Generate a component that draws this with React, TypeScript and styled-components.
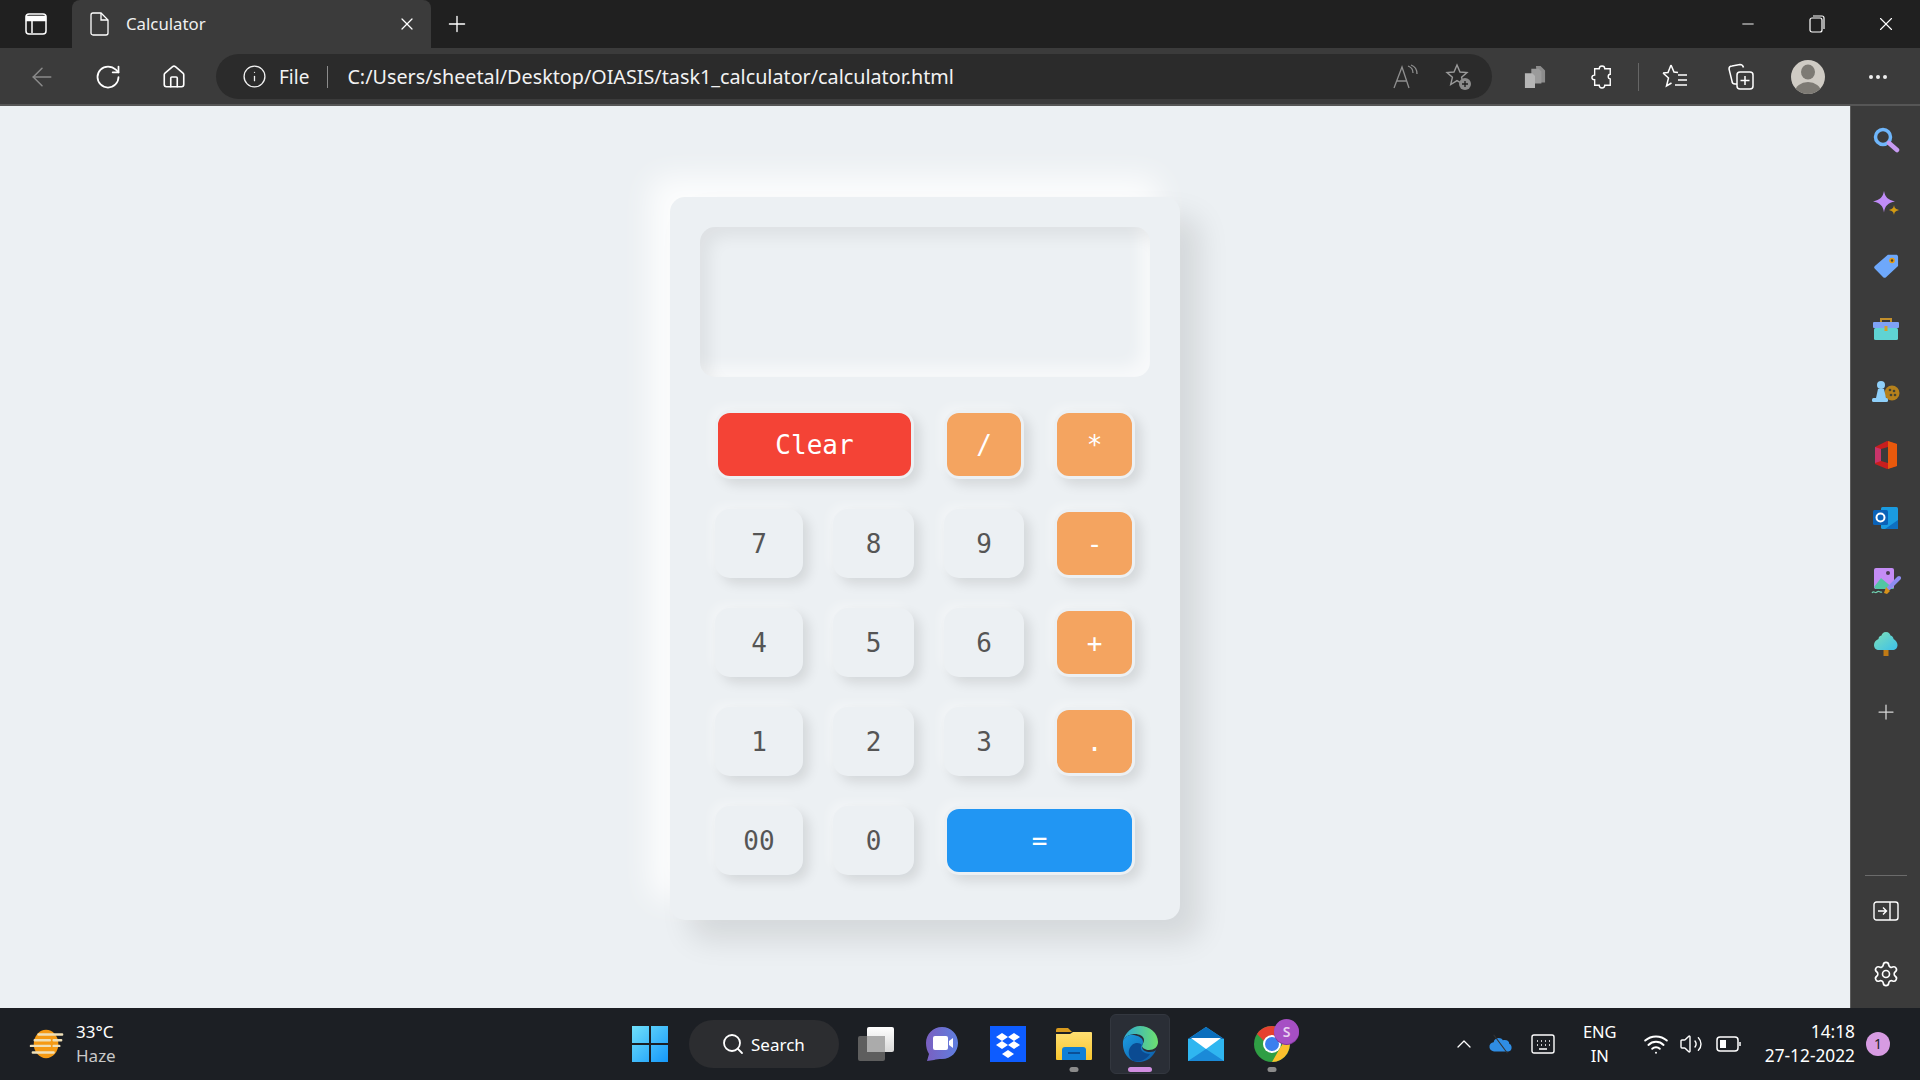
import React from "react"
import styled, { createGlobalStyle } from "styled-components"
import {
  ArrowLeft,
  ChevronUp,
  Home,
  Info,
  Minus,
  Plus,
  RotateCw,
  Search,
  Settings,
  Volume2,
  Wifi,
  X,
} from "lucide-react"

const UI_FONT = `"Noto Sans", "Open Sans", sans-serif`

const GlobalStyle = createGlobalStyle`
  html, body { margin: 0; padding: 0; height: 100%; }
  body { font-family: ${UI_FONT}; background: #ecf0f3; overflow: hidden; }
  * { box-sizing: border-box; }
`

const Screen = styled.div`
  width: 1920px;
  height: 1080px;
  display: flex;
  flex-direction: column;
`

/* browser chrome */
const TabStrip = styled.div`
  height: 48px;
  background: #202020;
  display: flex;
  align-items: center;
  color: #fff;
`

const PanelButton = styled.div`
  width: 72px;
  display: flex;
  justify-content: center;
`

const Tab = styled.div`
  width: 359px;
  height: 48px;
  background: #3b3b3b;
  border-radius: 8px 8px 0 0;
  display: flex;
  align-items: center;
  padding: 0 14px 0 18px;
`

const TabTitle = styled.span`
  margin: 0 0 2px 16px;
  flex: 1;
  font-size: 16.8px;
  color: #f0f0f0;
`

const NewTab = styled.div`
  width: 52px;
  display: flex;
  justify-content: center;
`

const WindowControls = styled.div`
  margin-left: auto;
  display: flex;
  align-items: center;
`

const WindowControl = styled.div`
  width: 69px;
  display: flex;
  justify-content: center;
`

const Toolbar = styled.div`
  height: 58px;
  background: #3b3b3b;
  border-bottom: 2px solid #565656;
  display: flex;
  align-items: center;
  color: #fff;
  padding-top: 1px;
`

const NavButton = styled.div<{ $w?: number; $muted?: boolean }>`
  width: ${p => p.$w ?? 66}px;
  display: flex;
  justify-content: center;
  align-items: center;
  color: ${p => (p.$muted ? "#8a8a8a" : "#fff")};
`

const NavGroup = styled.div`
  width: 207px;
  padding-left: 9px;
  display: flex;
`

const AddressBar = styled.div`
  width: 1276px;
  height: 45px;
  margin-left: 9px;
  border-radius: 23px;
  background: #2b2b2b;
  display: flex;
  align-items: center;
  padding: 0 6px 0 26px;
`

const SiteLabel = styled.span`
  font-size: 19px;
  margin-left: 12px;
  color: #f2f2f2;
`

const AddressDivider = styled.span`
  width: 1px;
  height: 22px;
  background: #8c8c8c;
  margin: 0 19px 0 18px;
`

const Url = styled.span`
  flex: 1;
  font-size: 19.75px;
  color: #f2f2f2;
  white-space: nowrap;
`

const ToolActions = styled.div`
  display: flex;
  align-items: center;
  margin-left: 8px;
`

const ToolbarSeparator = styled.span`
  width: 1px;
  height: 28px;
  background: #666;
  margin: 0 4px;
`

const Avatar = styled.div`
  width: 34px;
  height: 34px;
  border-radius: 50%;
  background: #cfcbc4;
  overflow: hidden;
`

const MoreDots = styled.span`
  display: flex;
  gap: 3px;
  i {
    width: 4px;
    height: 4px;
    background: #eee;
    border-radius: 50%;
  }
`

const Main = styled.div`
  flex: 1;
  display: flex;
  min-height: 0;
`

/* calculator page */
const Page = styled.main`
  flex: 1;
  display: flex;
  justify-content: center;
  align-items: center;
  padding-top: 3px;
  background: #ecf0f3;
`

const Calculator = styled.div`
  width: 510px;
  height: 723px;
  padding: 30px;
  border-radius: 15px;
  background: #ecf0f3;
  box-shadow: 20px 20px 30px rgba(0, 0, 0, 0.1), -20px -20px 30px rgba(255, 255, 255, 0.85);
`

const Display = styled.input`
  display: block;
  width: 450px;
  height: 150px;
  border: none;
  outline: none;
  border-radius: 15px;
  background: #ecf0f3;
  box-shadow: inset 10px 10px 15px rgba(0, 0, 0, 0.06),
    inset -10px -10px 15px rgba(255, 255, 255, 0.6);
`

const Keys = styled.div`
  margin: 33px 0 0 15px;
  display: grid;
  grid-template-columns: 88px 81px 80px 81px;
  grid-auto-rows: 69px;
  gap: 30px;
`

const Key = styled.button<{ $tone?: string; $span?: number }>`
  grid-column: span ${p => p.$span ?? 1};
  border: 3px solid #ecf0f3;
  border-radius: 15px;
  background: ${p => p.$tone ?? "#ecf0f3"};
  color: ${p => (p.$tone ? "#fff" : "#555")};
  font-family: "DejaVu Sans Mono", monospace;
  font-size: 26px;
  padding: 0;
  box-shadow: 6px 6px 12px rgba(0, 0, 0, 0.1), -5px -5px 10px rgba(255, 255, 255, 0.3);
`

/* side panel */
const SidePanel = styled.aside`
  width: 70px;
  background: #3b3b3b;
  border-left: 1px solid #5c5c5c;
  display: flex;
  flex-direction: column;
  align-items: center;
  padding: 2px 0 3px;
`

const SideItem = styled.div`
  height: 63px;
  width: 100%;
  display: flex;
  align-items: center;
  justify-content: center;
`

const SideAdd = styled(SideItem)`
  margin-top: 5px;
  color: #d8d8d8;
`

const SideRule = styled.div`
  width: 42px;
  height: 1px;
  background: #6b6b6b;
  margin: auto 0 3px;
`

const SideFooterItem = styled(SideItem)`
  color: #fff;
`

/* taskbar */
const Taskbar = styled.footer`
  height: 72px;
  background: #1c1f24;
  display: grid;
  grid-template-columns: 1fr auto 1fr;
  align-items: center;
  color: #fff;
`

const Weather = styled.div`
  display: flex;
  align-items: center;
  padding-left: 29px;
  gap: 11px;
`

const WeatherText = styled.div`
  font-size: 17px;
  line-height: 24px;
  span {
    display: block;
    color: #c8c8c8;
  }
`

const TaskIcons = styled.div`
  display: flex;
  align-items: center;
  padding-left: 2px;
`

const TaskIcon = styled.div<{ $active?: boolean }>`
  width: ${p => (p.$active ? 60 : 66)}px;
  height: 60px;
  margin: 0 ${p => (p.$active ? 3 : 0)}px;
  position: relative;
  display: flex;
  align-items: center;
  justify-content: center;
  border-radius: 6px;
  background: ${p => (p.$active ? "#2a2e36" : "transparent")};
  border: 1px solid ${p => (p.$active ? "#33373f" : "transparent")};
`

const RunningDot = styled.span<{ $active?: boolean }>`
  position: absolute;
  bottom: 1px;
  left: 50%;
  transform: translateX(-50%);
  width: ${p => (p.$active ? 24 : 9)}px;
  height: 5px;
  border-radius: 3px;
  background: ${p => (p.$active ? "#d08ee0" : "#8b8b8b")};
`

const ProfileBubble = styled.span`
  position: absolute;
  top: 4px;
  left: 34px;
  width: 25px;
  height: 25px;
  border-radius: 50%;
  background: #a64fc4;
  box-shadow: 0 1px 0 #7d3698;
  color: #e8d0f0;
  font-size: 14px;
  font-weight: 600;
  line-height: 25px;
  text-align: center;
`

const SearchPill = styled.div`
  width: 150px;
  height: 48px;
  margin: 0 4px 0 6px;
  border-radius: 24px;
  background: #2c2d30;
  display: flex;
  align-items: center;
  padding-left: 32px;
  gap: 6px;
  font-size: 17px;
`

const Tray = styled.div`
  display: flex;
  align-items: center;
  justify-content: flex-end;
  padding-right: 30px;
`

const TrayItem = styled.div<{ $w: number }>`
  width: ${p => p.$w}px;
  display: flex;
  justify-content: center;
  align-items: center;
`

const Lang = styled.div`
  font-size: 16.5px;
  line-height: 24px;
  text-align: center;
  width: 66px;
  margin-right: 5px;
`

const Clock = styled.div`
  font-size: 17.3px;
  line-height: 24px;
  text-align: right;
  margin-left: 15px;
`

const Badge = styled.div`
  width: 24px;
  height: 24px;
  border-radius: 50%;
  background: #d79be2;
  color: #222;
  font-size: 14px;
  line-height: 24px;
  text-align: center;
  margin-left: 11px;
`

const StarAdd = () => (
  <svg width="30" height="30" viewBox="0 0 30 30" fill="none" stroke="#9a9a9a" strokeWidth="1.4">
    <path d="M13 3l3 7 7 .6-5.400 4.700 1.700 7-6.300-3.700-6.300 4 1.700-7.300L3 10.600l7-.6z" />
    <circle cx="21" cy="22" r="6" fill="#8c8c8c" stroke="none" />
    <path d="M21 19v6M18 22h6" stroke="#222" />
  </svg>
)

const Sidebar = [
  <svg key="s" width="28" height="28" viewBox="0 0 28 28" fill="none">
    <circle cx="11" cy="11" r="7.500" stroke="#6fb6fb" strokeWidth="3.500" />
    <path d="M17 17l8 7" stroke="#c79bf2" strokeWidth="4.500" strokeLinecap="round" />
  </svg>,
  <svg key="sp" width="26" height="26" viewBox="0 0 26 26">
    <path d="M11 1c1 6 4 9 11 10.500-7 1.500-10 4-11 11-1-7-4-9.500-11-11C7 10 10 7 11 1z" fill="#c08cf8" />
    <path d="M21 15c.5 3 1.500 4 5 5-3.500 1-4.500 2-5 5-.5-3-1.500-4-5-5 3.500-1 4.500-2 5-5z" fill="#d39a12" />
  </svg>,
  <svg key="t" width="26" height="26" viewBox="0 0 28 28">
    <path d="M16 2h9c1 0 2 1 2 2v10L14 26c-1 1-2 1-3 0L2 17c-1-1-1-2 0-3z" fill="#6ea8fb" />
    <circle cx="20.500" cy="8" r="3" fill="#e89a10" />
    <circle cx="20.500" cy="8" r="1.300" fill="#443" />
  </svg>,
  <svg key="b" width="28" height="26" viewBox="0 0 28 26" fill="none">
    <path d="M9 7V3h10v4" stroke="#c28f2c" strokeWidth="2" />
    <rect x="1" y="6" width="26" height="6" rx="1" fill="#7fa2f6" />
    <rect x="2" y="12" width="24" height="12" rx="1.500" fill="#5fd3d3" />
    <rect x="12.500" y="10" width="3" height="5" fill="#d3a02c" />
  </svg>,
  <svg key="g" width="28" height="26" viewBox="0 0 28 26">
    <circle cx="20" cy="14" r="7.500" fill="#b5811c" />
    <circle cx="18" cy="11" r="1.300" fill="#443" />
    <circle cx="22" cy="12" r="1.300" fill="#443" />
    <circle cx="19" cy="16" r="1.300" fill="#443" />
    <circle cx="23" cy="16" r="1.300" fill="#443" />
    <circle cx="9" cy="6" r="4" fill="#8fd0fa" />
    <path d="M6 10h6l2 9H4z" fill="#8fd0fa" />
    <rect x="0" y="19" width="16" height="4" rx="1.500" fill="#8fd0fa" />
  </svg>,
  <svg key="o" width="26" height="28" viewBox="0 0 26 28">
    <path d="M2 6l12-6 10 3v22l-10 3-12-5z" fill="#c81e1e" />
    <path d="M15 0l9 3v22l-9 3z" fill="#e8590c" />
    <path d="M8 8l7-2v16l-7-2z" fill="#3b3b3b" />
    <path d="M2 6l6 2v12l-6 2z" fill="#c8346a" />
  </svg>,
  <svg key="ol" width="26" height="24" viewBox="0 0 26 24">
    <rect x="8" y="1" width="17" height="22" rx="1.500" fill="#1a9be0" />
    <path d="M12 23l13-9v9z" fill="#0e6fc0" />
    <rect x="0" y="4" width="15" height="15" rx="1.500" fill="#0a62b8" />
    <circle cx="7.500" cy="11.500" r="4" fill="none" stroke="#fff" strokeWidth="2" />
  </svg>,
  <svg key="d" width="30" height="28" viewBox="0 0 30 28">
    <rect x="3" y="1" width="20" height="21" rx="2" fill="#c48cf5" />
    <path d="M3 20l7-9 13 11H5z" fill="#52c6a4" />
    <circle cx="17" cy="6" r="2" fill="#4a3b52" />
    <path d="M28 11L18 21" stroke="#8d8df2" strokeWidth="4" strokeLinecap="round" />
    <path d="M15 20l4 4-3 3-3-1z" fill="#d8921a" />
    <path d="M1 26c2-3 3 1 5-1s3 1 5 0" stroke="#6fd0b0" strokeWidth="1.200" fill="none" />
  </svg>,
  <svg key="tr" width="24" height="26" viewBox="0 0 24 26">
    <defs>
      <linearGradient id="treeFill" x1="0" y1="0" x2="1" y2="1">
        <stop offset="0" stopColor="#7fe0b8" />
        <stop offset="1" stopColor="#3cc0ea" />
      </linearGradient>
    </defs>
    <path d="M12 1c3 0 4 2 4.500 3.500 2 .5 3 2 3 3.500 2 1 4 3.500 4 6 0 3-2 5-5 5H5c-3 0-5-2-5-5 0-3 2-5 4.500-6 0-2 1-3 3-3.500C8 3 9 1 12 1z" fill="url(#treeFill)" />
    <rect x="9.500" y="19" width="5" height="6" fill="#c07a14" />
  </svg>,
]

const Calc = () => {
  const orange = "#f4a460"
  return (
    <Calculator>
      <Display readOnly />
      <Keys>
        <Key $span={2} $tone="#f44336">Clear</Key>
        <Key $tone={orange}>/</Key>
        <Key $tone={orange}>*</Key>
        <Key>7</Key>
        <Key>8</Key>
        <Key>9</Key>
        <Key $tone={orange}>-</Key>
        <Key>4</Key>
        <Key>5</Key>
        <Key>6</Key>
        <Key $tone={orange}>+</Key>
        <Key>1</Key>
        <Key>2</Key>
        <Key>3</Key>
        <Key $tone={orange}>.</Key>
        <Key>00</Key>
        <Key>0</Key>
        <Key $span={2} $tone="#2196f3">=</Key>
      </Keys>
    </Calculator>
  )
}

const App = () => (
  <Screen>
    <GlobalStyle />
    <TabStrip>
      <PanelButton>
        <svg width="22" height="22" viewBox="0 0 22 22" fill="none" stroke="#fff" strokeWidth="1.500">
          <rect x="1" y="1" width="20" height="20" rx="3" />
          <path d="M1.500 3.500h19v4h-19z" fill="#fff" />
          <path d="M7 8v12" />
        </svg>
      </PanelButton>
      <Tab>
        <svg width="20" height="24" viewBox="0 0 20 24" fill="none" stroke="#fff" strokeWidth="1.300">
          <path d="M3 1h8l7 7v13a2 2 0 0 1-2 2H3a2 2 0 0 1-2-2V3a2 2 0 0 1 2-2z" />
          <path d="M11 1v7h7" />
        </svg>
        <TabTitle>Calculator</TabTitle>
        <X size={20} strokeWidth={1.500} />
      </Tab>
      <NewTab>
        <Plus size={26} strokeWidth={1.250} />
      </NewTab>
      <WindowControls>
        <WindowControl><Minus size={18} strokeWidth={1.250} /></WindowControl>
        <WindowControl>
          <svg width="16" height="18" viewBox="0 0 16 18" fill="none" stroke="#fff" strokeWidth="1.200">
            <rect x="1" y="3" width="12" height="14" rx="2" />
            <path d="M4 1h9a2 2 0 0 1 2 2v11" />
          </svg>
        </WindowControl>
        <WindowControl><X size={22} strokeWidth={1.250} /></WindowControl>
      </WindowControls>
    </TabStrip>
    <Toolbar>
      <NavGroup>
        <NavButton $muted><ArrowLeft size={30} strokeWidth={1.250} /></NavButton>
        <NavButton><RotateCw size={28} strokeWidth={1.500} /></NavButton>
        <NavButton><Home size={26} strokeWidth={1.500} /></NavButton>
      </NavGroup>
      <AddressBar>
        <Info size={25} strokeWidth={1.250} color="#f2f2f2" />
        <SiteLabel>File</SiteLabel>
        <AddressDivider />
        <Url>C:/Users/sheetal/Desktop/OIASIS/task1_calculator/calculator.html</Url>
        <NavButton $w={54}>
          <svg width="28" height="28" viewBox="0 0 28 28" fill="none" stroke="#8f8f8f" strokeWidth="1.300">
            <path d="M3 25L11 4l7 21M6 18h10M17 3c3 1 5 4 5 7M20 2c3 1 6 4 6 9" />
          </svg>
        </NavButton>
        <NavButton $w={54}><StarAdd /></NavButton>
      </AddressBar>
      <ToolActions>
        <NavButton $w={70}>
          <svg width="22" height="24" viewBox="0 0 24 26">
            <path d="M13 1h5l5 5v13h-8z" fill="#8c8c8c" />
            <path d="M8 4h8l3 3v13H8z" fill="#9b9b9b" />
            <path d="M1 9h8l3 3v13H1z" fill="#b5b5b5" />
          </svg>
        </NavButton>
        <NavButton $w={64}>
          <svg width="22" height="26" viewBox="0 0 24 28" fill="none" stroke="#fff" strokeWidth="1.500">
            <path d="M9 5c0-4 6-4 6 0h6v6c-3 0-3 5 0 5v7h-6c0 4-6 4-6 0H4v-6c-4 0-4-5 0-5V5z" />
          </svg>
        </NavButton>
        <ToolbarSeparator />
        <NavButton $w={64}>
          <svg width="28" height="28" viewBox="0 0 28 28" fill="none" stroke="#fff" strokeWidth="1.500">
            <path d="M10 2l3 7 4 .5M2 10l5.500 5-2 8 5-3M2 10l5-.500L10 2M17 12h9M17 17h9M14 22h12" />
          </svg>
        </NavButton>
        <NavButton $w={68}>
          <svg width="26" height="28" viewBox="0 0 26 28" fill="none" stroke="#fff" strokeWidth="1.500">
            <path d="M9 21H7a3 3 0 0 1-3-3L1 6a3 3 0 0 1 3-3l8-1.500c2 0 3 1 3.500 3" />
            <rect x="9" y="9" width="16" height="17" rx="3" />
            <path d="M17 13v9M12.500 17.500h9" />
          </svg>
        </NavButton>
        <NavButton $w={66}>
          <Avatar>
            <svg width="34" height="34" viewBox="0 0 34 34">
              <ellipse cx="17" cy="12" rx="7" ry="7.500" fill="#7d7a74" />
              <ellipse cx="17" cy="32" rx="13" ry="10" fill="#7d7a74" />
            </svg>
          </Avatar>
        </NavButton>
        <NavButton $w={74}>
          <MoreDots><i /><i /><i /></MoreDots>
        </NavButton>
      </ToolActions>
    </Toolbar>
    <Main>
      <Page>
        <Calc />
      </Page>
      <SidePanel>
        {Sidebar.map(icon => (
          <SideItem key={icon.key}>{icon}</SideItem>
        ))}
        <SideAdd><Plus size={24} strokeWidth={1.250} /></SideAdd>
        <SideRule />
        <SideFooterItem>
          <svg width="26" height="20" viewBox="0 0 26 20" fill="none" stroke="#fff" strokeWidth="1.400">
            <rect x="1" y="1" width="24" height="18" rx="2.500" />
            <path d="M17 1v18M5 10h8M10 6.500l3.500 3.500-3.500 3.500" />
          </svg>
        </SideFooterItem>
        <SideFooterItem><Settings size={28} strokeWidth={1.400} /></SideFooterItem>
      </SidePanel>
    </Main>
    <Taskbar>
      <Weather>
        <svg width="36" height="32" viewBox="0 0 38 32">
          <ellipse cx="18" cy="16" rx="13" ry="15" fill="#f59a14" />
          <path d="M10 6h25M6 12h16M26 12h8M2 18h20M26 18h6M4 25h22" stroke="#efe0b8" strokeWidth="2.500" strokeLinecap="round" />
        </svg>
        <WeatherText>
          33°C
          <span>Haze</span>
        </WeatherText>
      </Weather>
      <TaskIcons>
        <TaskIcon>
          <svg width="36" height="36" viewBox="0 0 36 36">
            <defs>
              <linearGradient id="startFill" x1="0" y1="0" x2="1" y2="1">
                <stop offset="0" stopColor="#6fe0fb" />
                <stop offset="1" stopColor="#1598fa" />
              </linearGradient>
            </defs>
            <path d="M0 0h17v17H0zM19 0h17v17H19zM0 19h17v17H0zM19 19h17v17H19z" fill="url(#startFill)" />
          </svg>
        </TaskIcon>
        <SearchPill>
          <Search size={24} strokeWidth={1.800} />
          Search
        </SearchPill>
        <TaskIcon>
          <svg width="36" height="34" viewBox="0 0 36 34">
            <defs>
              <linearGradient id="viewFront" x1="0" y1="0" x2="0" y2="1">
                <stop offset="0" stopColor="#fff" />
                <stop offset="1" stopColor="#d8d8d8" />
              </linearGradient>
            </defs>
            <rect x="0" y="9" width="27" height="25" rx="2" fill="#5e5e5e" />
            <rect x="9" y="0" width="27" height="25" rx="2" fill="url(#viewFront)" />
            <rect x="9" y="9" width="18" height="16" fill="#ababab" />
          </svg>
        </TaskIcon>
        <TaskIcon>
          <svg width="34" height="36" viewBox="0 0 34 36">
            <defs>
              <linearGradient id="meetFill" x1="0" y1="0" x2="1" y2="0">
                <stop offset="0" stopColor="#7a5fc0" />
                <stop offset="1" stopColor="#5f7fe0" />
              </linearGradient>
            </defs>
            <path d="M17 1c9 0 16 7 16 16s-7 16-16 16c-3 0-6 0-8 1l-7 1 2-7C2 25 1 21 1 17 1 8 8 1 17 1z" fill="url(#meetFill)" />
            <rect x="8" y="10" width="15" height="14" rx="2" fill="#fff" />
            <path d="M24 15l4-3v10l-4-3z" fill="#fff" />
          </svg>
        </TaskIcon>
        <TaskIcon>
          <svg width="36" height="36" viewBox="0 0 36 36">
            <rect width="36" height="36" fill="#0d5cff" />
            <path d="M12 7l6 4-6 4-6-4zM24 7l6 4-6 4-6-4zM12 15l6 4-6 4-6-4zM24 15l6 4-6 4-6-4zM18 24l6 4-6 4-6-4z" fill="#fff" />
          </svg>
        </TaskIcon>
        <TaskIcon>
          <svg width="36" height="32" viewBox="0 0 36 32">
            <defs>
              <linearGradient id="folderFill" x1="0" y1="0" x2="0" y2="1">
                <stop offset="0" stopColor="#ffdf72" />
                <stop offset="1" stopColor="#f8c62e" />
              </linearGradient>
            </defs>
            <path d="M0 2a2 2 0 0 1 2-2h10l4 4H0z" fill="#d89a1e" />
            <path d="M0 6h14l3-2h18a1 1 0 0 1 1 1v26a1 1 0 0 1-1 1H1a1 1 0 0 1-1-1z" fill="url(#folderFill)" />
            <path d="M6 32V22a3 3 0 0 1 3-3h18a3 3 0 0 1 3 3v10z" fill="#0f7fd6" />
            <rect x="12" y="24" width="12" height="2" fill="#0b4f96" />
          </svg>
          <RunningDot />
        </TaskIcon>
        <TaskIcon $active>
          <svg width="36" height="36" viewBox="0 0 36 36">
            <defs>
              <linearGradient id="edgeTop" x1="0" y1="0" x2="1" y2="0">
                <stop offset="0" stopColor="#2aa7d8" />
                <stop offset="1" stopColor="#6ee06e" />
              </linearGradient>
              <linearGradient id="edgeBody" x1="0" y1="0" x2="1" y2="1">
                <stop offset="0" stopColor="#1c9be0" />
                <stop offset="1" stopColor="#0c5aa6" />
              </linearGradient>
            </defs>
            <path d="M18 0c10 0 18 7 18 16 0 5-4 8-9 8-3 0-7-2-7-4 0-2 2-3 2-6 0-4-5-6-9-6-5 0-10 2-12 7C3 7 10 0 18 0z" fill="url(#edgeTop)" />
            <path d="M1 15c2-5 7-7 11-6 5 1 9 3 9 7 0 2-1 3-1 5 0 3 4 5 8 5 3 0 5-1 6-2-3 7-9 12-17 12C7 36 0 27 1 15z" fill="url(#edgeBody)" />
            <path d="M11 35C6 31 5 24 10 19c4-3 8-2 10 0-1 1-2 3 0 6 2 2 5 3 8 3-4 6-11 9-17 7z" fill="#0b4b92" />
          </svg>
          <RunningDot $active />
        </TaskIcon>
        <TaskIcon>
          <svg width="36" height="34" viewBox="0 0 36 34">
            <path d="M0 12L18 0l18 12v22H0z" fill="#2fb6f0" />
            <path d="M0 12L18 0l18 12z" fill="#0b6fbd" />
            <path d="M3 11h30L18 22z" fill="#fff" />
            <path d="M0 34l18-12 18 12z" fill="#1a8ad8" />
          </svg>
        </TaskIcon>
        <TaskIcon>
          <svg width="36" height="36" viewBox="0 0 36 36">
            <circle cx="18" cy="18" r="18" fill="#2f9e44" />
            <path d="M18 0a18 18 0 0 1 16 10H18a8 8 0 0 0-8 5L3 8a18 18 0 0 1 15-8z" fill="#e5402f" />
            <path d="M34 10a18 18 0 0 1-16 26l8-14a8 8 0 0 0 0-12z" fill="#fbc02d" />
            <circle cx="18" cy="18" r="9" fill="#fff" />
            <circle cx="18" cy="18" r="7" fill="#3a7fee" />
          </svg>
          <ProfileBubble>S</ProfileBubble>
          <RunningDot />
        </TaskIcon>
      </TaskIcons>
      <Tray>
        <TrayItem $w={38}><ChevronUp size={24} strokeWidth={1.300} /></TrayItem>
        <TrayItem $w={36}>
          <svg width="24" height="22" viewBox="0 0 26 22">
            <path d="M6 19a5 5 0 0 1-1-10c1-5 8-6 10-2 4-1 7 1 7 4 3 0 4 8-1 8z" fill="#2f8de4" />
            <path d="M5 1l15 20" stroke="#333" strokeWidth="1.200" />
          </svg>
        </TrayItem>
        <TrayItem $w={48}>
          <svg width="24" height="22" viewBox="0 0 24 22" fill="none" stroke="#fff" strokeWidth="1.400">
            <rect x="1" y="2" width="22" height="18" rx="2" />
            <path d="M6 8h1M10 8h1M14 8h1M18 8h1M6 12h1M10 12h1M14 12h1M18 12h1M8 16h8" />
          </svg>
        </TrayItem>
        <Lang>ENG<br />IN</Lang>
        <TrayItem $w={36}><Wifi size={26} strokeWidth={1.800} /></TrayItem>
        <TrayItem $w={34}><Volume2 size={24} strokeWidth={1.400} /></TrayItem>
        <TrayItem $w={42}>
          <svg width="26" height="18" viewBox="0 0 26 18" fill="none" stroke="#fff" strokeWidth="1.500">
            <rect x="1" y="2" width="21" height="14" rx="3" />
            <rect x="4" y="5" width="6" height="8" fill="#fff" stroke="none" />
            <path d="M24 7v4" />
          </svg>
        </TrayItem>
        <Clock>14:18<br />27-12-2022</Clock>
        <Badge>1</Badge>
      </Tray>
    </Taskbar>
  </Screen>
)

export default App
